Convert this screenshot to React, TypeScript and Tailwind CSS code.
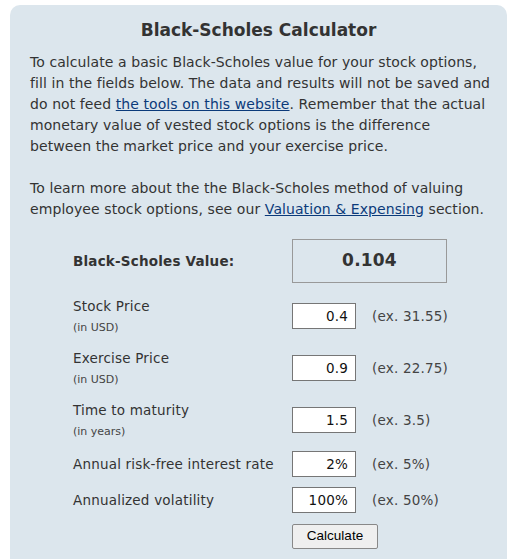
import React from 'react';

const rows = [
  { label: 'Stock Price', sub: '(in USD)', value: '0.4', ex: '(ex. 31.55)' },
  { label: 'Exercise Price', sub: '(in USD)', value: '0.9', ex: '(ex. 22.75)' },
  { label: 'Time to maturity', sub: '(in years)', value: '1.5', ex: '(ex. 3.5)' },
  { label: 'Annual risk-free interest rate', value: '2%', ex: '(ex. 5%)' },
  { label: 'Annualized volatility', value: '100%', ex: '(ex. 50%)' },
];

export default function App() {
  return (
    <div className="min-h-[559px] bg-white pt-[5px] pl-[10px] pr-[19px] font-['DejaVu_Sans',Verdana,sans-serif] text-[#333]">
      <div className="min-h-[554px] rounded-t-[10px] bg-[#dce6ed] px-5 pt-[13px]">
        <h1 className="text-center text-[17px] font-bold leading-6">Black-Scholes Calculator</h1>

        <div className="mt-[10px] whitespace-nowrap text-[14px] leading-[21px] tracking-[0.08px]">
          <p>
            To calculate a basic Black-Scholes value for your stock options,
            <br />
            fill in the fields below. The data and results will not be saved and
            <br />
            do not feed <a href="#" className="text-[#0b3a7a] underline">the tools on this website</a>. Remember
            that the actual
            <br />
            monetary value of vested stock options is the difference
            <br />
            between the market price and your exercise price.
          </p>
          <p className="mt-[21px]">
            To learn more about the the Black-Scholes method of valuing
            <br />
            employee stock options, see our{' '}
            <a href="#" className="text-[#0b3a7a] underline">Valuation &amp; Expensing</a> section.
          </p>
        </div>

        <div className="mt-3 pl-[43px] text-[13.5px] tracking-[0.2px]">
          <div className="flex items-center py-[7px]">
            <div className="w-[219px] font-bold">Black-Scholes Value:</div>
            <div className="flex h-[44px] w-[155px] items-center justify-center border border-[#999] text-[17px] font-bold">
              0.104
            </div>
          </div>

          {rows.map((r) => (
            <div key={r.label} className="flex items-center py-[5px]">
              <div className="w-[219px]">
                <div className={r.sub ? 'pt-[2px] leading-[19px]' : 'leading-[21px]'}>{r.label}</div>
                {r.sub && (
                  <div className="pt-[2px] text-[11px] leading-[19px] tracking-normal text-[#444]">{r.sub}</div>
                )}
              </div>
              <input
                readOnly
                value={r.value}
                className="h-[26px] w-[64px] border border-[#767676] bg-white pr-[7px] text-right text-[13.5px] text-[#111] outline-none"
              />
              <div className="ml-4 text-[#444]">{r.ex}</div>
            </div>
          ))}

          <div className="flex pt-[6px] pb-[5px] pl-[219px]">
            <button className="h-[25px] w-[86px] rounded-[2px] border border-[#888] bg-[#efefef] font-['Liberation_Sans',Arial,sans-serif] text-[13.5px] tracking-normal text-black">
              Calculate
            </button>
          </div>
        </div>
      </div>
    </div>
  );
}
